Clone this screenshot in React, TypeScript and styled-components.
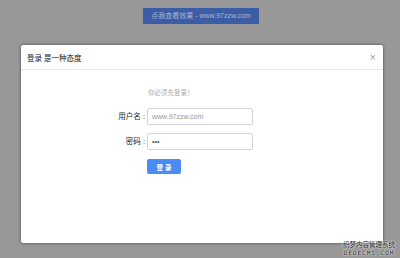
import React from 'react'
import styled, { createGlobalStyle } from 'styled-components'

const GlobalStyle = createGlobalStyle`
  html, body {
    margin: 0;
    padding: 0;
  }
  body {
    font-family: "Liberation Sans", "Noto Sans CJK SC", sans-serif;
  }
`

export default function App() {
  return (
    <S.Page>
      <GlobalStyle />
      <S.TopBar>
        <S.DemoButton>点我查看效果 - www.97zzw.com</S.DemoButton>
      </S.TopBar>
      <S.Modal>
        <S.Header>
          <S.Title>登录 是一种态度</S.Title>
          <S.Close>×</S.Close>
        </S.Header>
        <S.Form>
          <div />
          <S.Notice>你必须先登录！</S.Notice>
          <S.Label>用户名 :</S.Label>
          <S.Input placeholder="www.97zzw.com" />
          <S.Label>密码 :</S.Label>
          <S.Input type="password" defaultValue="123" />
          <div />
          <S.Submit>登 录</S.Submit>
        </S.Form>
      </S.Modal>
      <S.Watermark>
        <span>织梦内容管理系统</span>
        <S.WatermarkSmall>DEDECMS.COM</S.WatermarkSmall>
      </S.Watermark>
    </S.Page>
  )
}

export const S = {
  Page: styled.div`
    position: relative;
    width: 400px;
    height: 258px;
    background: #989898;
    overflow: hidden;
  `,
  TopBar: styled.div`
    display: flex;
    justify-content: center;
    padding-top: 8px;
    padding-left: 2px;
  `,
  DemoButton: styled.div`
    width: 116px;
    height: 16px;
    line-height: 16px;
    background: #3a5da5;
    border-radius: 1px;
    color: #a9b6d2;
    font-size: 7px;
    text-align: center;
  `,
  Modal: styled.div`
    margin: 21px 0 0 21px;
    width: 362px;
    height: 198px;
    background: #fff;
    border-radius: 2px;
    box-shadow: 0 0 3px rgba(0, 0, 0, 0.55);
  `,
  Header: styled.div`
    height: 24px;
    border-bottom: 1px solid #e5e5e5;
    display: flex;
    align-items: center;
    justify-content: space-between;
    padding: 0 7px 0 6px;
  `,
  Title: styled.span`
    font-size: 7.5px;
    color: #222;
  `,
  Close: styled.span`
    font-size: 11px;
    color: #9a9a9a;
    line-height: 1;
  `,
  Form: styled.div`
    display: grid;
    grid-template-columns: 126px 106px;
    grid-template-rows: 20px 25px 26px 17px;
    padding-top: 18px;
    align-items: start;
  `,
  Notice: styled.div`
    font-size: 6.5px;
    color: #aaa;
    padding-left: 1px;
    line-height: 10px;
  `,
  Label: styled.label`
    font-size: 7.5px;
    color: #222;
    text-align: right;
    line-height: 17px;
    padding-right: 2px;
  `,
  Input: styled.input`
    box-sizing: border-box;
    width: 106px;
    height: 17px;
    margin: 0;
    padding: 0 4px;
    border: 1px solid #d4d4d4;
    border-radius: 2px;
    font-family: "Liberation Sans", sans-serif;
    font-size: 7px;
    color: #555;
    outline: none;
    &::placeholder {
      color: #999;
    }
  `,
  Submit: styled.button`
    width: 34px;
    height: 15px;
    margin: 0;
    padding: 0;
    border: none;
    border-radius: 2px;
    background: #4a8cf3;
    color: #fff;
    font-family: "Liberation Sans", "Noto Sans CJK SC", sans-serif;
    font-size: 6.5px;
    font-weight: bold;
  `,
  Watermark: styled.div`
    position: absolute;
    right: 5px;
    bottom: 1px;
    display: flex;
    flex-direction: column;
    align-items: center;
    font-size: 6.5px;
    line-height: 8px;
    color: #222;
    text-shadow: 0 0 2px #fff, 0 0 2px #fff;
  `,
  WatermarkSmall: styled.span`
    font-family: "DejaVu Sans Mono", monospace;
    letter-spacing: 1px;
    font-size: 6px;
  `
}
